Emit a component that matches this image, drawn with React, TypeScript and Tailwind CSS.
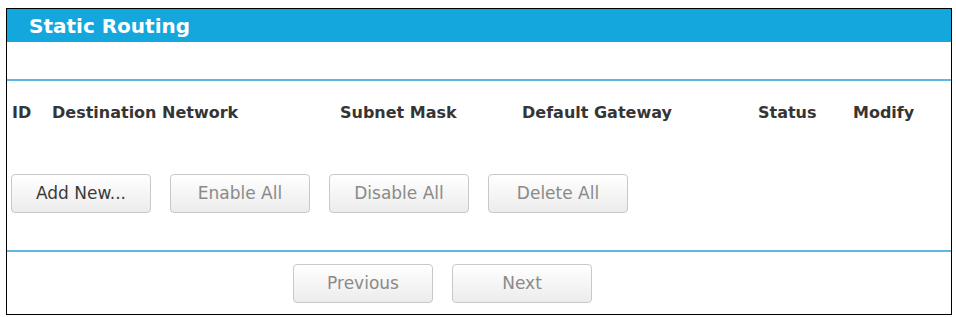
const font = "font-['Verdana','DejaVu_Sans',sans-serif]";

const columns = [
  { label: "ID", className: "w-[40px]" },
  { label: "Destination Network", className: "w-[288px]" },
  { label: "Subnet Mask", className: "w-[182px]" },
  { label: "Default Gateway", className: "w-[236px]" },
  { label: "Status", className: "w-[95px]" },
  { label: "Modify", className: "flex-1" },
];

function RouterButton({
  children,
  disabled = false,
  className = "",
}: {
  children: React.ReactNode;
  disabled?: boolean;
  className?: string;
}) {
  return (
    <button
      type="button"
      className={`h-[39px] w-[140px] rounded-[4px] border border-[#c8c8c8] bg-gradient-to-b from-white to-[#ececec] text-[17px] ${
        disabled ? "text-[#8a8a8a]" : "text-[#3a3a3a]"
      } ${className}`}
    >
      {children}
    </button>
  );
}

export default function App() {
  return (
    <div className={`h-[317px] w-[956px] bg-white pl-[6px] pt-[8px] ${font}`}>
      <div className="flex h-[307px] w-[946px] flex-col border border-black">
        <div className="flex h-[33px] items-center bg-[#14a7de] pl-[22px]">
          <h1 className="text-[20px] font-bold text-white">Static Routing</h1>
        </div>

        <div className="h-[37px]" />
        <div className="h-[2px] bg-[#5cb8df]" />

        <div className="flex h-[62px] items-center pl-[5px] pt-[1px] text-[16px] font-bold text-[#353535]">
          {columns.map((col) => (
            <div key={col.label} className={col.className}>
              {col.label}
            </div>
          ))}
        </div>

        <div className="flex gap-[19px] pl-[4px] pt-[31px]">
          <RouterButton>Add New...</RouterButton>
          <RouterButton disabled>Enable All</RouterButton>
          <RouterButton disabled>Disable All</RouterButton>
          <RouterButton disabled>Delete All</RouterButton>
        </div>

        <div className="mt-[37px] h-[2px] bg-[#5cb8df]" />

        <div className="flex gap-[19px] pl-[286px] pt-[12px]">
          <RouterButton disabled className="h-[37px]">
            Previous
          </RouterButton>
          <RouterButton disabled className="h-[37px]">
            Next
          </RouterButton>
        </div>
      </div>
    </div>
  );
}
